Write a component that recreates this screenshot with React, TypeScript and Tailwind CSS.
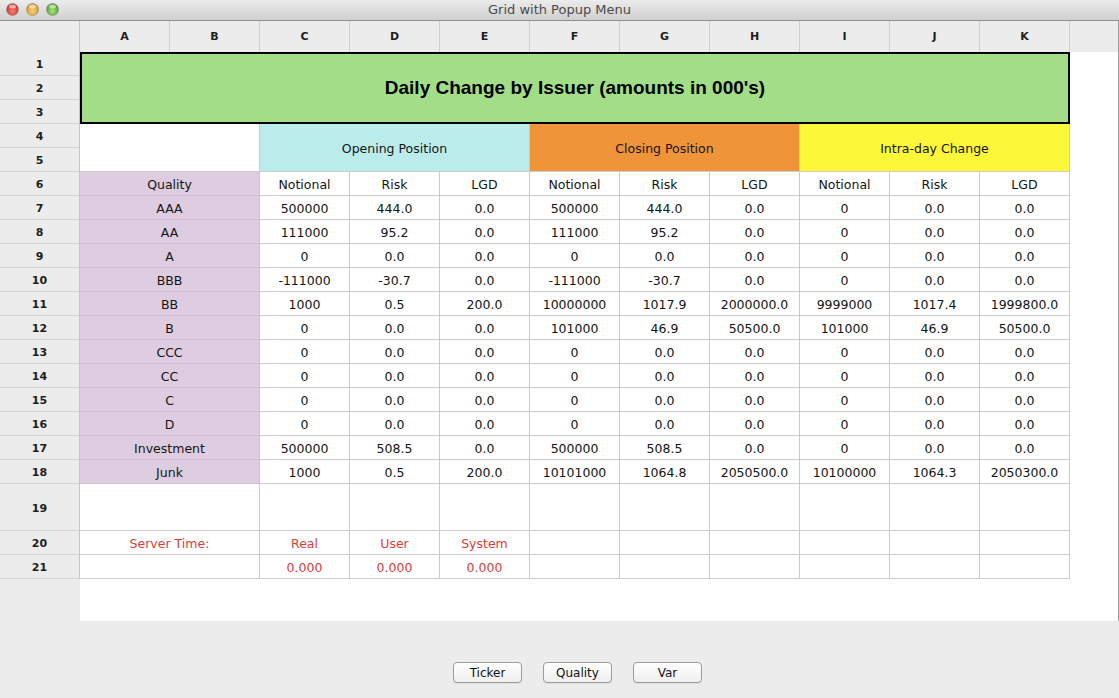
import React from 'react';

const COLS = ['A', 'B', 'C', 'D', 'E', 'F', 'G', 'H', 'I', 'J', 'K'];

const DATA: [string, string[]][] = [
  ['AAA', ['500000', '444.0', '0.0', '500000', '444.0', '0.0', '0', '0.0', '0.0']],
  ['AA', ['111000', '95.2', '0.0', '111000', '95.2', '0.0', '0', '0.0', '0.0']],
  ['A', ['0', '0.0', '0.0', '0', '0.0', '0.0', '0', '0.0', '0.0']],
  ['BBB', ['-111000', '-30.7', '0.0', '-111000', '-30.7', '0.0', '0', '0.0', '0.0']],
  ['BB', ['1000', '0.5', '200.0', '10000000', '1017.9', '2000000.0', '9999000', '1017.4', '1999800.0']],
  ['B', ['0', '0.0', '0.0', '101000', '46.9', '50500.0', '101000', '46.9', '50500.0']],
  ['CCC', ['0', '0.0', '0.0', '0', '0.0', '0.0', '0', '0.0', '0.0']],
  ['CC', ['0', '0.0', '0.0', '0', '0.0', '0.0', '0', '0.0', '0.0']],
  ['C', ['0', '0.0', '0.0', '0', '0.0', '0.0', '0', '0.0', '0.0']],
  ['D', ['0', '0.0', '0.0', '0', '0.0', '0.0', '0', '0.0', '0.0']],
  ['Investment', ['500000', '508.5', '0.0', '500000', '508.5', '0.0', '0', '0.0', '0.0']],
  ['Junk', ['1000', '0.5', '200.0', '10101000', '1064.8', '2050500.0', '10100000', '1064.3', '2050300.0']],
];

const SUB = ['Notional', 'Risk', 'LGD', 'Notional', 'Risk', 'LGD', 'Notional', 'Risk', 'LGD'];

function RowHead({ n }: { n: number }) {
  return (
    <div className="flex items-center justify-center pt-[4px] bg-[#ececec] border-r border-b border-r-[#c4c4c4] border-b-[#d4d4d4] text-[11px] font-bold text-[#1e1e1e]">
      {n}
    </div>
  );
}

function Cell({ children, red }: { children?: React.ReactNode; red?: boolean }) {
  return (
    <div
      className={
        'flex items-center justify-center pt-[4px] border-r border-b border-[#cbcbcb] bg-white text-[12.5px] ' +
        (red ? 'text-[#d8403a]' : 'text-[#141414]')
      }
    >
      {children}
    </div>
  );
}

function Light({ c1, c2 }: { c1: string; c2: string }) {
  const id = 'g' + c1.replace('#', '');
  return (
    <svg width="13" height="13" viewBox="0 0 13 13">
      <defs>
        <radialGradient id={id} cx="50%" cy="65%" r="60%">
          <stop offset="0%" stopColor={c1} />
          <stop offset="100%" stopColor={c2} />
        </radialGradient>
      </defs>
      <circle cx="6.5" cy="6.5" r="6" fill={`url(#${id})`} stroke="#6f6f6f" strokeOpacity="0.55" strokeWidth="0.8" />
      <ellipse cx="6.5" cy="3.6" rx="3.4" ry="2" fill="#ffffff" fillOpacity="0.55" />
    </svg>
  );
}

function Btn({ label }: { label: string }) {
  return (
    <button className="h-[21px] w-[69px] rounded-[4px] border border-[#9b9b9b] bg-linear-to-b from-white to-[#efefef] text-[12px] text-[#111] shadow-[0_1px_0_rgba(0,0,0,0.06)]">
      {label}
    </button>
  );
}

export default function App() {
  return (
    <div className="w-[1119px] h-[698px] overflow-hidden bg-[#ececec] flex flex-col font-['DejaVu_Sans',sans-serif]">
      {/* Title bar */}
      <div className="relative h-[21px] shrink-0 flex items-center justify-center bg-linear-to-b from-[#ececec] to-[#d0d0d0] border-b border-[#8f8f8f]">
        <div className="absolute left-[6px] top-[3px] flex gap-[7px]">
          <Light c1="#ff7b6e" c2="#c9302a" />
          <Light c1="#ffd277" c2="#d6911c" />
          <Light c1="#a6e57a" c2="#4d9a2a" />
        </div>
        <span className="text-[13px] text-[#4a4a4a]">Grid with Popup Menu</span>
      </div>

      {/* Spreadsheet */}
      <div className="grid w-[1119px] shrink-0 border-r border-[#9d9d9d] grid-cols-[80px_repeat(11,90px)_1fr] grid-rows-[31px_repeat(18,24px)_47px_24px_24px_42px]">
        {/* column header row */}
        <div className="bg-[#ececec] border-r border-[#c4c4c4]" />
        {COLS.map((c) => (
          <div
            key={c}
            className="flex items-center justify-center pt-[2px] bg-[#ececec] border-r border-[#cfcfcf] text-[11px] font-bold text-[#1e1e1e]"
          >
            {c}
          </div>
        ))}
        <div className="bg-[#ececec]" />

        {/* row 1-3 */}
        <RowHead n={1} />
        <div className="col-span-11 row-span-3 flex items-center justify-center bg-[#a2de87] border-2 border-black">
          <span className="font-['Liberation_Sans',sans-serif] font-bold text-[19px] text-black">
            Daily Change by Issuer (amounts in 000's)
          </span>
        </div>
        <div className="row-span-21 bg-white" />
        <RowHead n={2} />
        <RowHead n={3} />

        {/* row 4-5 */}
        <RowHead n={4} />
        <div className="col-span-2 row-span-2 bg-white border-r border-b border-[#cbcbcb]" />
        <div className="col-span-3 row-span-2 flex items-center justify-center pt-[4px] bg-[#bbecec] border-r border-b border-[#cbcbcb] text-[12.5px] text-[#141414]">
          Opening Position
        </div>
        <div className="col-span-3 row-span-2 flex items-center justify-center pt-[4px] bg-[#f09439] border-r border-b border-[#cbcbcb] text-[12.5px] text-[#141414]">
          Closing Position
        </div>
        <div className="col-span-3 row-span-2 flex items-center justify-center pt-[4px] bg-[#fdf73a] border-r border-b border-[#cbcbcb] text-[12.5px] text-[#141414]">
          Intra-day Change
        </div>
        <RowHead n={5} />

        {/* row 6 */}
        <RowHead n={6} />
        <div className="col-span-2 flex items-center justify-center pt-[4px] bg-[#decde0] border-r border-b border-[#cfc3d2] text-[12.5px] text-[#141414]">
          Quality
        </div>
        {SUB.map((s, i) => (
          <Cell key={i}>{s}</Cell>
        ))}

        {/* data rows */}
        {DATA.map(([q, vals], r) => (
          <React.Fragment key={q}>
            <RowHead n={7 + r} />
            <div className="col-span-2 flex items-center justify-center pt-[4px] bg-[#decde0] border-r border-b border-[#cfc3d2] text-[12.5px] text-[#141414]">
              {q}
            </div>
            {vals.map((v, i) => (
              <Cell key={i}>{v}</Cell>
            ))}
          </React.Fragment>
        ))}

        {/* row 19 */}
        <RowHead n={19} />
        <div className="col-span-2 bg-white border-r border-b border-[#cbcbcb]" />
        {Array.from({ length: 9 }).map((_, i) => (
          <Cell key={i} />
        ))}

        {/* row 20 */}
        <RowHead n={20} />
        <div className="col-span-2 flex items-center justify-center pt-[4px] bg-white border-r border-b border-[#cbcbcb] text-[12.5px] text-[#d8403a]">
          Server Time:
        </div>
        <Cell red>Real</Cell>
        <Cell red>User</Cell>
        <Cell red>System</Cell>
        {Array.from({ length: 6 }).map((_, i) => (
          <Cell key={i} />
        ))}

        {/* row 21 */}
        <RowHead n={21} />
        <div className="col-span-2 bg-white border-r border-b border-[#cbcbcb]" />
        <Cell red>0.000</Cell>
        <Cell red>0.000</Cell>
        <Cell red>0.000</Cell>
        {Array.from({ length: 6 }).map((_, i) => (
          <Cell key={i} />
        ))}

        {/* blank area */}
        <div className="bg-[#ececec]" />
        <div className="col-span-12 bg-white" />
      </div>

      {/* Buttons */}
      <div className="flex-1 flex justify-center items-start pt-[41px] pl-[36px] gap-[21px]">
        <Btn label="Ticker" />
        <Btn label="Quality" />
        <Btn label="Var" />
      </div>
    </div>
  );
}
